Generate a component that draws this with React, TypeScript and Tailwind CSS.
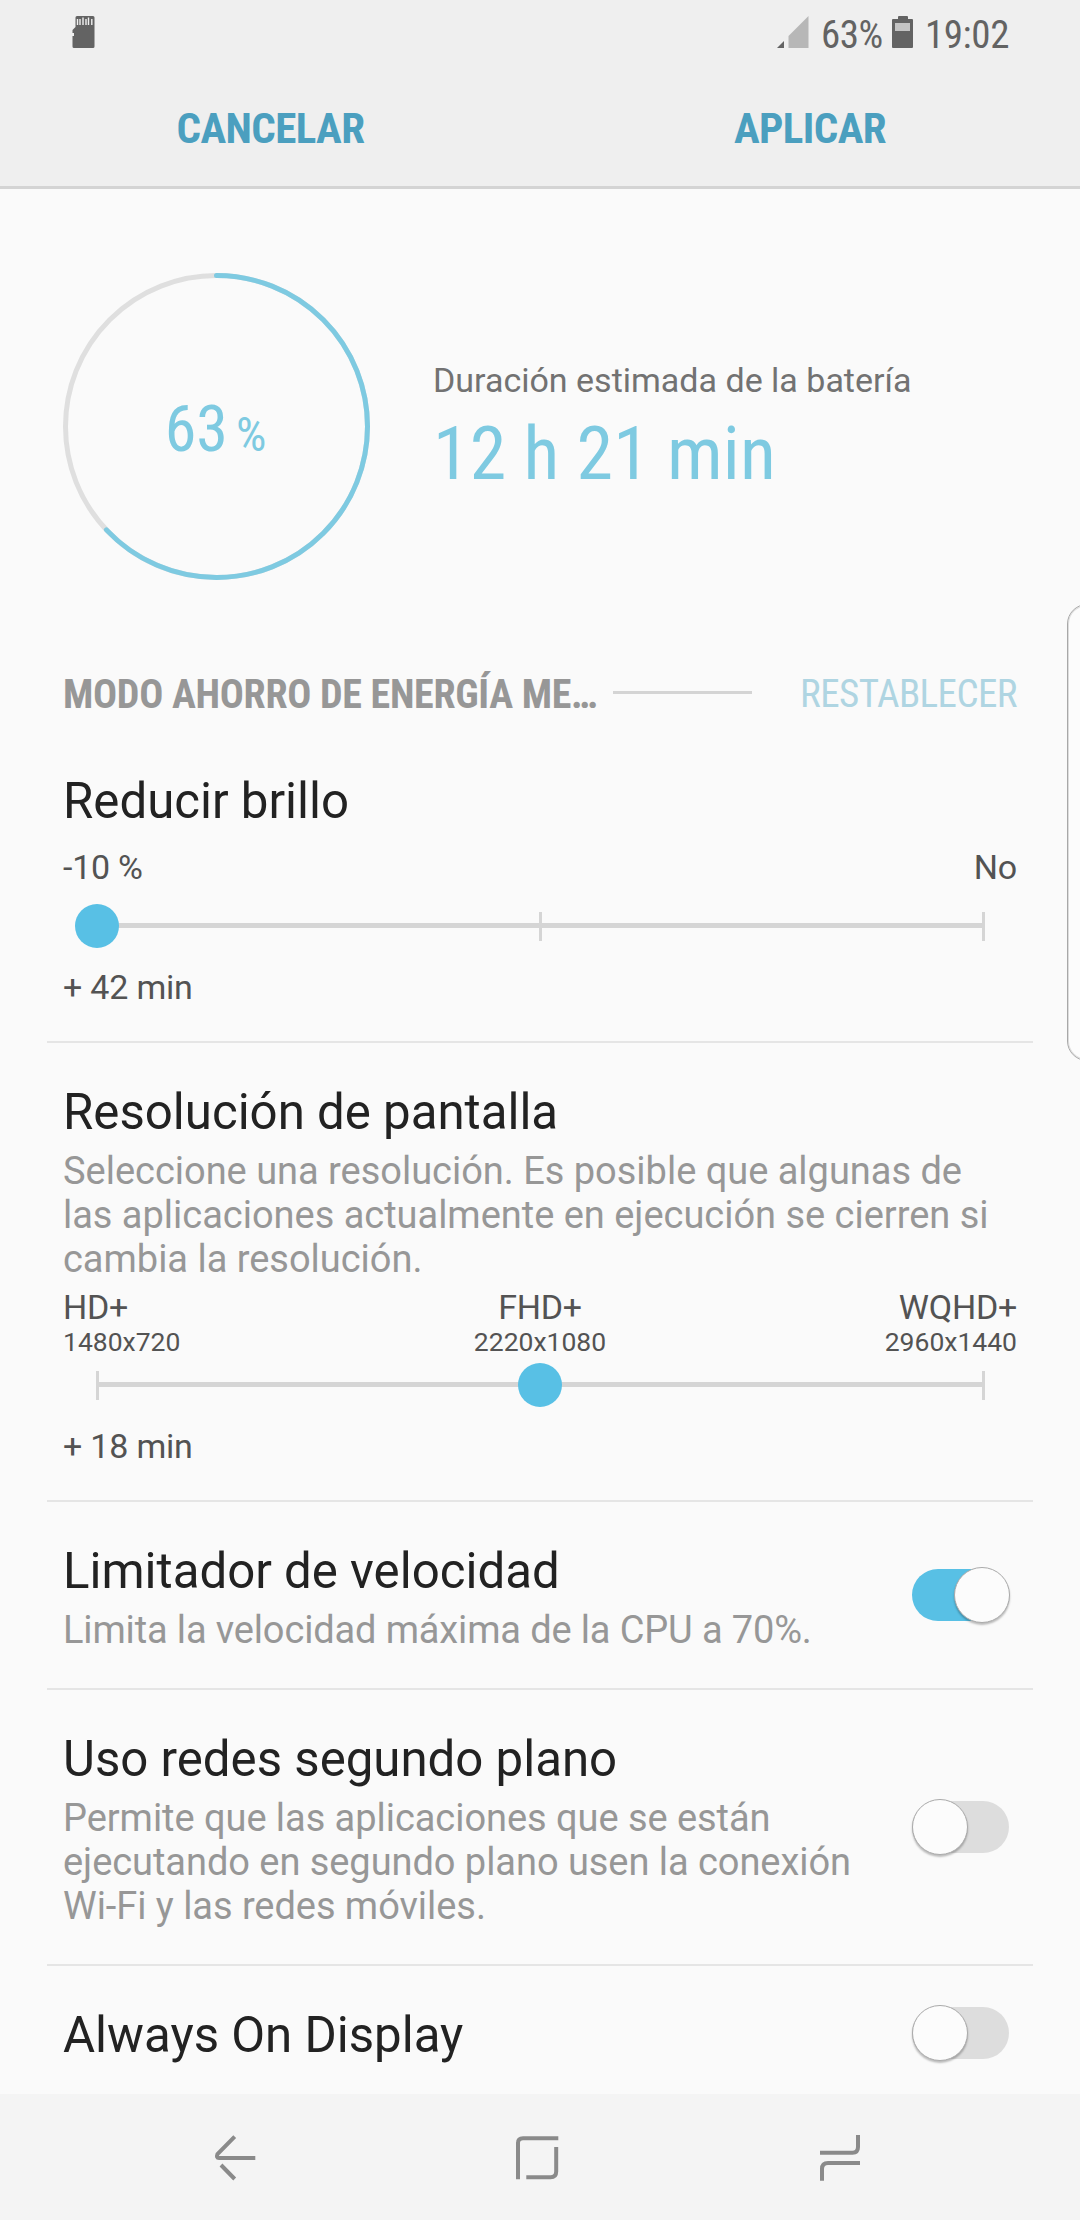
const CONDENSED = "[font-stretch:75%]";

type Stop = { label: string; sub?: string; align: string };

function SdCard() {
  return (
    <svg width="23" height="34" viewBox="0 0 23 34">
      <path d="M5 1h16a1.500 1.500 0 0 1 1.500 1.500v29a1.500 1.500 0 0 1-1.500 1.500H2a1.500 1.500 0 0 1-1.500-1.500V21h1.500v-3H0.500v-3L3.500 12V2.500A1.500 1.500 0 0 1 5 1z" fill="#636363" />
      <path d="M5.500 4v6M8 4v6M11 2.500v7.500M14 4v6M16.500 2.500v7.500M19.800 4v6" stroke="#efefef" strokeWidth="1.400" />
    </svg>
  );
}

function Signal() {
  return (
    <svg width="32" height="32" viewBox="0 0 32 32">
      <path d="M0 32 7 25v7z" fill="#636363" />
      <path d="M11.500 32V20L31.500 0v32z" fill="#b7b7b7" />
    </svg>
  );
}

function Battery() {
  return (
    <svg width="21" height="33" viewBox="0 0 21 33">
      <path d="M7 0h8a1 1 0 0 1 1 1v2h4a1 1 0 0 1 1 1v27a1 1 0 0 1-1 1H1a1 1 0 0 1-1-1V4a1 1 0 0 1 1-1h5V1a1 1 0 0 1 1-1z" fill="#636363" />
      <rect x="3" y="7" width="15" height="8" fill="#c3c3c3" />
    </svg>
  );
}

function StatusBar() {
  return (
    <div className="flex h-[66px] items-start justify-between pr-[71px] pl-[72px]">
      <div className="pt-[15px]"><SdCard /></div>
      <div className={`flex text-[39px] leading-[46px] tracking-[-0.4px] text-[#636363] ${CONDENSED}`}>
        <div className="mr-[12px] pt-[16px]"><Signal /></div>
        <span className="mt-[12px]">63%</span>
        <div className="mr-[12px] ml-[9px] pt-[16px]"><Battery /></div>
        <span className="mt-[12px]">19:02</span>
      </div>
    </div>
  );
}

function BatteryRing({ percent }: { percent: number }) {
  return (
    <div className="grid h-[307px] w-[307px] shrink-0 place-items-center">
      <svg className="col-start-1 row-start-1" width="307" height="307" viewBox="0 0 307 307" fill="none" strokeWidth="5">
        <circle cx="153.500" cy="153.500" r="151" stroke="#dfdfdf" />
        <circle
          cx="153.500"
          cy="153.500"
          r="151"
          stroke="#7ecae1"
          strokeLinecap="round"
          pathLength={100}
          strokeDasharray={`${percent} 100`}
          transform="rotate(-90 153.500 153.500)"
        />
      </svg>
      <div className={`col-start-1 row-start-1 flex items-baseline pt-[6px] pr-[2px] text-[#7ecae1] ${CONDENSED}`}>
        <span className="text-[64px] leading-[75px]">{percent}</span>
        <span className="ml-[8px] text-[48px] leading-[50px]">%</span>
      </div>
    </div>
  );
}

// steps sit 443px apart, thumb is 44px wide
function Slider({ value }: { value: number }) {
  return (
    <div className="relative mr-[32px] ml-[33px] h-[44px] pt-[19px]">
      <div className="h-[5px] bg-[#d5d5d5]" />
      <div className="absolute inset-x-0 top-[8px] flex h-[29px] justify-between">
        {[0, 1, 2].map((tick) => (
          <div key={tick} className="w-[3px] bg-[#d5d5d5]" />
        ))}
      </div>
      <div className="absolute top-0 h-[44px] w-[44px] rounded-full bg-[#58c0e5]" style={{ left: value * 443 - 21 }} />
    </div>
  );
}

function Stops({ stops }: { stops: Stop[] }) {
  return (
    <div className="grid grid-cols-3 text-[34px] leading-[40px] tracking-[-0.25px] text-[#535353]">
      {stops.map((s) => (
        <div key={s.label} className={s.align}>
          <div>{s.label}</div>
          {s.sub && <div className="text-[26.5px] leading-[29px] tracking-normal">{s.sub}</div>}
        </div>
      ))}
    </div>
  );
}

function Toggle({ on }: { on: boolean }) {
  return (
    <div className={`flex h-[52px] w-[97px] shrink-0 items-center rounded-full ${on ? "justify-end bg-[#58c0e5]" : "bg-[#dddddd]"}`}>
      <div className={`h-[56px] w-[56px] shrink-0 rounded-full border border-[#aaaaaa] bg-[#fcfcfc] shadow-[0_2px_2px_rgba(0,0,0,0.25)] ${on ? "-mr-px" : ""}`} />
    </div>
  );
}

function Divider() {
  return <div className="mx-[47px] h-[2px] bg-[#e5e5e5]" />;
}

const title = "text-[49.2px] leading-[58px] text-[#222222]";
const desc = "mt-[8px] text-[38px] leading-[44px] text-[#979797]";
const gain = "pt-[19px] text-[34px] leading-[40px] tracking-[-0.2px] text-[#535353]";
const row = "flex items-center justify-between pr-[71px] pl-[63px]";

export default function App() {
  return (
    <div className="relative flex h-[2220px] w-[1080px] flex-col overflow-hidden bg-[#fafafa] font-['Roboto',sans-serif]">
      {/* Header */}
      <header className="h-[189px] shrink-0 border-b-[3px] border-[#d4d4d4] bg-[#efefef]">
        <StatusBar />
        <div className={`grid grid-cols-2 text-center text-[43px] leading-[50px] font-bold tracking-[-0.6px] text-[#4b9fbf] ${CONDENSED}`}>
          <button className="pt-[37px] pl-px">CANCELAR</button>
          <button className="pt-[37px]">APLICAR</button>
        </div>
      </header>

      <main className="h-[1905px] shrink-0 overflow-hidden">
        {/* Battery estimate */}
        <section className="flex pt-[84px] pl-[63px]">
          <BatteryRing percent={63} />
          <div className="pt-[87px] pl-[63px]">
            <p className="text-[34px] leading-[40px] text-[#727272]">Duración estimada de la batería</p>
            <p className={`mt-[9px] text-[74px] leading-[89px] tracking-[0.15px] text-[#7ecae1] ${CONDENSED}`}>12 h 21 min</p>
          </div>
        </section>

        {/* Mode heading */}
        <div className={`mt-[90px] flex h-[48px] items-start px-[63px] ${CONDENSED}`}>
          <h2 className="w-[534px] text-[40px] leading-[49px] font-bold tracking-[-0.3px] whitespace-nowrap text-[#979797]">MODO AHORRO DE ENERGÍA ME…</h2>
          <div className="mt-[21px] ml-[16px] h-[3px] w-[139px] bg-[#d4d4d4]" />
          <button className="ml-auto text-[39px] leading-[48px] tracking-[-0.55px] text-[#afd5e2]">RESTABLECER</button>
        </div>

        <section className="px-[63px] pt-[54px] pb-[34px]">
          <h3 className={title}>Reducir brillo</h3>
          <div className="py-[17px]">
            <Stops stops={[{ label: "-10 %", align: "text-left" }, { label: "No", align: "col-start-3 text-right" }]} />
          </div>
          <Slider value={0} />
          <p className={gain}>+ 42 min</p>
        </section>
        <Divider />

        <section className="px-[63px] pt-[40px] pb-[34px]">
          <h3 className={title}>Resolución de pantalla</h3>
          <p className={`tracking-[-0.02px] ${desc}`}>
            Seleccione una resolución. Es posible que algunas de<br />
            las aplicaciones actualmente en ejecución se cierren si<br />
            cambia la resolución.
          </p>
          <div className="pt-[6px] pb-[7px]">
            <Stops
              stops={[
                { label: "HD+", sub: "1480x720", align: "text-left" },
                { label: "FHD+", sub: "2220x1080", align: "text-center" },
                { label: "WQHD+", sub: "2960x1440", align: "text-right" },
              ]}
            />
          </div>
          <Slider value={1} />
          <p className={gain}>+ 18 min</p>
        </section>
        <Divider />

        <section className={row}>
          <div className="pt-[40px] pb-[36px]">
            <h3 className={title}>Limitador de velocidad</h3>
            <p className={`tracking-[-0.14px] ${desc}`}>Limita la velocidad máxima de la CPU a 70%.</p>
          </div>
          <Toggle on />
        </section>
        <Divider />

        <section className={row}>
          <div className="pt-[40px] pb-[36px]">
            <h3 className={title}>Uso redes segundo plano</h3>
            <p className={`tracking-[-0.05px] ${desc}`}>
              Permite que las aplicaciones que se están<br />
              ejecutando en segundo plano usen la conexión<br />
              Wi-Fi y las redes móviles.
            </p>
          </div>
          <Toggle on={false} />
        </section>
        <Divider />

        <section className={row}>
          <h3 className={`pt-[40px] pb-[36px] ${title}`}>Always On Display</h3>
          <Toggle on={false} />
        </section>
      </main>

      {/* Edge panel handle */}
      <div className="absolute top-[604px] -right-[47px] h-[457px] w-[60px] rounded-[20px] border border-[#a8a8a8] bg-[#fcfcfc] shadow-[inset_0_0_0_1px_#dddddd]" />

      <nav className="flex h-[126px] shrink-0 items-center gap-[256px] bg-[#f4f4f4] pl-[212px]">
        <svg width="46" height="48" viewBox="0 0 46 48" fill="none" stroke="#8a8a8a" strokeWidth="4">
          <path d="M22.700 3.700 5.500 21Q4 25 7 25H43.300M9 32 22.700 46" />
        </svg>
        <svg width="46" height="48" viewBox="0 0 46 48" fill="none" stroke="#8a8a8a" strokeWidth="4">
          <path d="M4 46.300V10Q4 5.200 9 5.200H44.300M42.200 14V38.500Q42.200 44.300 36.500 44.300H12.300" />
        </svg>
        <svg width="46" height="48" viewBox="0 0 46 48" fill="none" stroke="#8a8a8a" strokeWidth="4">
          <path d="M42 2V14Q42 19.700 36.500 19.700H4M6 47.700V36Q6 30 12 30H44" />
        </svg>
      </nav>
    </div>
  );
}
